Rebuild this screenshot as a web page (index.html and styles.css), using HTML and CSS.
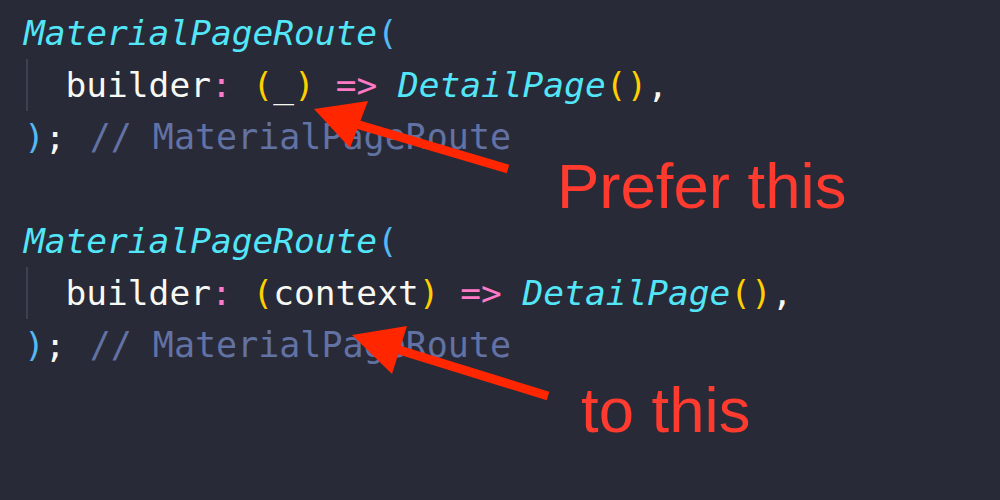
FILE: index.html
```html
<!DOCTYPE html>
<html lang="en">
<head>
<meta charset="utf-8">
<title>Prefer underscore</title>
<link rel="stylesheet" href="styles.css">
</head>
<body>
<main class="page">
  <div class="code">
    <div class="line"><span class="fn">MaterialPageRoute</span><span class="br">(</span></div>
    <div class="line guide">  builder<span class="op">:</span> <span class="par">(</span>_<span class="par">)</span> <span class="op">=&gt;</span> <span class="fn">DetailPage</span><span class="par">()</span>,</div>
    <div class="line"><span class="br">)</span>;<span class="cm"> // MaterialPageRoute</span></div>
  </div>
  <p class="note note-first">Prefer this</p>
  <div class="code">
    <div class="line"><span class="fn">MaterialPageRoute</span><span class="br">(</span></div>
    <div class="line guide">  builder<span class="op">:</span> <span class="par">(</span>context<span class="par">)</span> <span class="op">=&gt;</span> <span class="fn">DetailPage</span><span class="par">()</span>,</div>
    <div class="line"><span class="br">)</span>;<span class="cm"> // MaterialPageRoute</span></div>
  </div>
  <p class="note note-second">to this</p>

  <svg class="arrows" width="1000" height="500" viewBox="0 0 1000 500" aria-hidden="true">
    <line x1="508" y1="169" x2="356" y2="124" class="shaft"/>
    <polygon points="314,109 368,101 350,148" class="head"/>
    <line x1="548" y1="396" x2="396" y2="349" class="shaft"/>
    <polygon points="352,335 407,326 392,374" class="head"/>
  </svg>
</main>
</body>
</html>
```

FILE: styles.css
```css
html, body {
  margin: 0;
  padding: 0;
  background: #282a37;
}

.page {
  position: relative;
  width: 1000px;
  height: 500px;
  overflow: hidden;
  background: #282a37;
  padding-top: 7px;
  box-sizing: border-box;
}

.code {
  padding-left: 24px;
  font-family: "DejaVu Sans Mono", monospace;
  font-size: 34.5px;
  line-height: 52px;
  color: #f8f8f2;
}

.line {
  white-space: pre;
  height: 52px;
}

.guide {
  background: linear-gradient(#3e4150, #3e4150) no-repeat 2px 0 / 2px 100%;
}

.fn {
  color: #53e6f8;
  font-style: italic;
}

.br {
  color: #55b8f2;
}

.par {
  color: #ffcf00;
}

.op {
  color: #ff79c6;
}

.cm {
  color: #6272a4;
  font-size: 35px;
  margin-left: 3px;
}

.note {
  margin: 0;
  font-family: "Liberation Sans", Arial, sans-serif;
  font-size: 63.5px;
  line-height: 46px;
  color: #ff3a2f;
}

.note-first {
  padding-left: 557px;
  margin-bottom: 6px;
}

.note-second {
  padding-left: 581px;
  margin-top: 16px;
}

.arrows {
  position: absolute;
  left: 0;
  top: 0;
  pointer-events: none;
}

.shaft {
  stroke: #ff2600;
  stroke-width: 9;
  stroke-linecap: butt;
}

.head {
  fill: #ff2600;
}
```
